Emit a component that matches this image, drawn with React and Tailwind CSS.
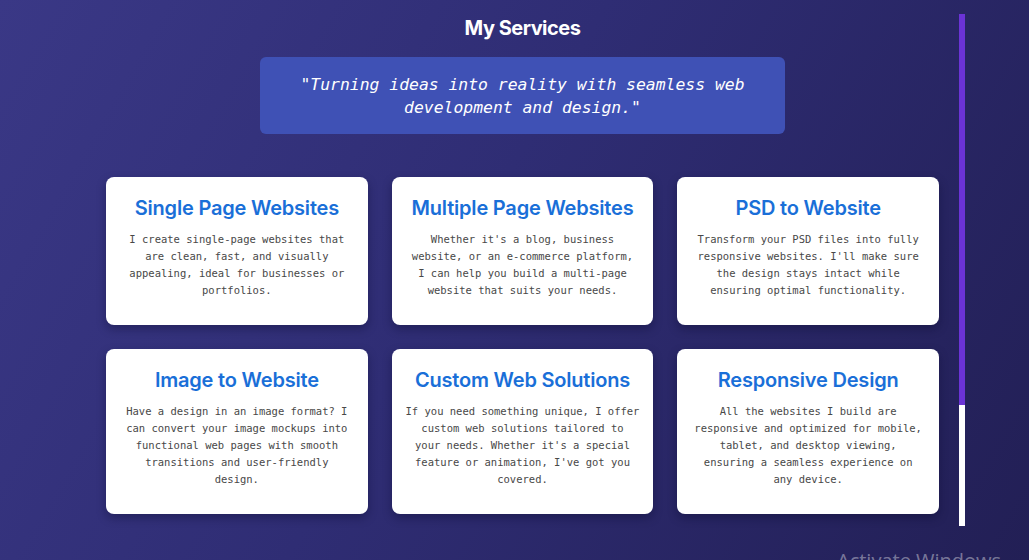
import React from 'react';

const services = [
  {
    title: 'Single Page Websites',
    lines: ['I create single-page websites that', 'are clean, fast, and visually', 'appealing, ideal for businesses or', 'portfolios.'],
  },
  {
    title: 'Multiple Page Websites',
    lines: ["Whether it's a blog, business", 'website, or an e-commerce platform,', 'I can help you build a multi-page', 'website that suits your needs.'],
  },
  {
    title: 'PSD to Website',
    lines: ['Transform your PSD files into fully', "responsive websites. I'll make sure", 'the design stays intact while', 'ensuring optimal functionality.'],
  },
  {
    title: 'Image to Website',
    lines: ['Have a design in an image format? I', 'can convert your image mockups into', 'functional web pages with smooth', 'transitions and user-friendly', 'design.'],
  },
  {
    title: 'Custom Web Solutions',
    lines: ['If you need something unique, I offer', 'custom web solutions tailored to', "your needs. Whether it's a special", "feature or animation, I've got you", 'covered.'],
  },
  {
    title: 'Responsive Design',
    lines: ['All the websites I build are', 'responsive and optimized for mobile,', 'tablet, and desktop viewing,', 'ensuring a seamless experience on', 'any device.'],
  },
];

function ServiceCard({ title, lines }) {
  return (
    <div className="bg-white rounded-lg pt-[17px] pb-[26px] px-2 text-center shadow-[0_4px_10px_rgba(10,8,40,0.35)]">
      <h3 className="text-[20px] leading-[28px] font-semibold text-[#1a6fd8] tracking-[-0.2px] [font-family:Inter,'Noto_Sans',sans-serif]">
        {title}
      </h3>
      <p className="mt-[9px] text-[10.5px] leading-[17px] text-[#484848] whitespace-nowrap [font-family:'DejaVu_Sans_Mono',monospace]">
        {lines.map((l, i) => (
          <React.Fragment key={i}>
            {l}
            {i < lines.length - 1 && <br />}
          </React.Fragment>
        ))}
      </p>
    </div>
  );
}

export default function App() {
  return (
    <div className="relative h-[560px] w-[1029px] overflow-hidden bg-[linear-gradient(120deg,#3a3886_0%,#2f2d74_45%,#221f55_100%)]">
      <div className="flex pl-[106px]">
        <main className="w-[833px] flex flex-col items-center pt-[14px]">
          <h2 className="text-white text-[20px] leading-[28px] font-bold tracking-[-0.5px] [font-family:Inter,'Noto_Sans',sans-serif]">
            My Services
          </h2>
          <div className="mt-[15px] w-[525px] h-[77px] rounded-md bg-[#3f51b5] flex flex-col items-center justify-center text-white italic text-[16.4px] leading-[23px] [font-family:'DejaVu_Sans_Mono',monospace]">
            <span>"Turning ideas into reality with seamless web</span>
            <span>development and design."</span>
          </div>
          <div className="mt-[43px] w-full grid grid-cols-3 gap-6">
            {services.map((s) => (
              <ServiceCard key={s.title} {...s} />
            ))}
          </div>
        </main>
        <div className="ml-[20px] mt-[14px] w-[6px] flex flex-col">
          <div className="h-[391px] bg-[#6b33d6]" />
          <div className="h-[121px] bg-white" />
        </div>
      </div>
      <div className="absolute left-[837px] top-[546px] text-[20px] text-white/40 [font-family:'Open_Sans',sans-serif] whitespace-nowrap">
        Activate Windows
      </div>
    </div>
  );
}
